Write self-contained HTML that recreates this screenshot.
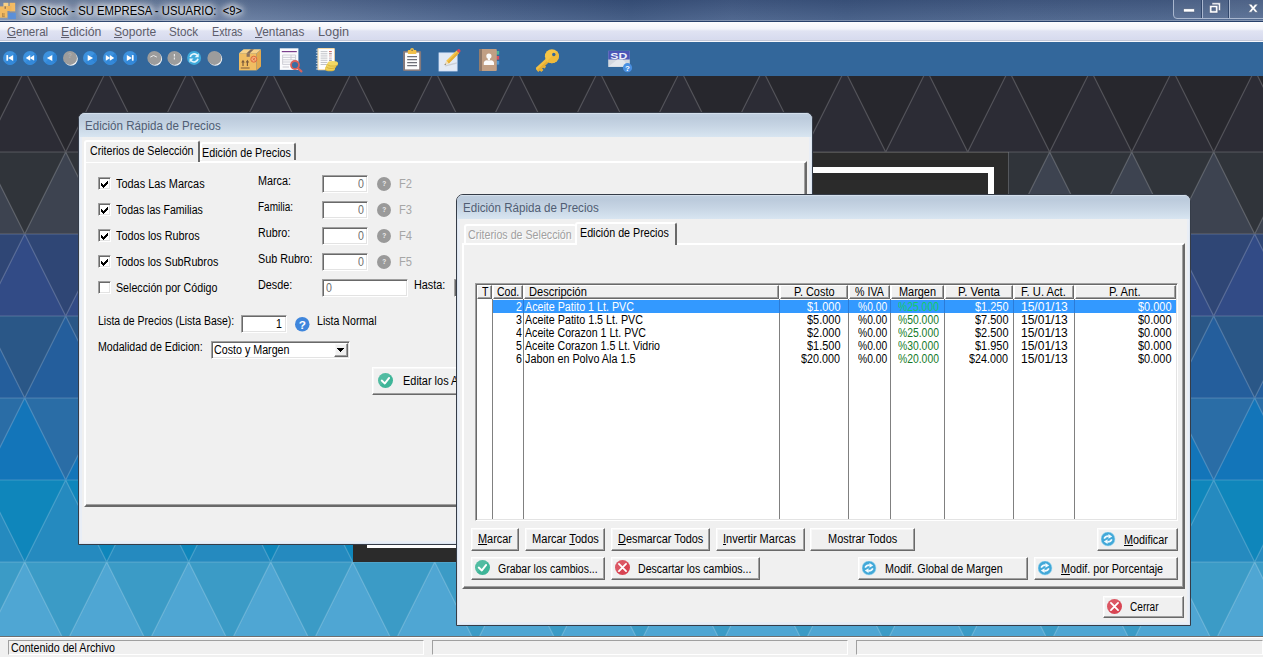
<!DOCTYPE html>
<html lang="es"><head><meta charset="utf-8"><title>SD Stock</title>
<style>
html,body{margin:0;padding:0;}
body{width:1263px;height:657px;overflow:hidden;position:relative;background:#2a2a30;font-family:"Liberation Sans",sans-serif;font-size:11px;}
.bg{position:absolute;left:0;top:0;}
.t{position:absolute;z-index:3;white-space:pre;font-family:"Liberation Sans",sans-serif;font-size:12px;line-height:16px;color:#000;transform-origin:0 0;}
.t u{text-decoration:underline;text-underline-offset:1px;}
.abs{position:absolute;box-sizing:border-box;}
.layer{position:absolute;left:0;top:0;width:1263px;height:657px;}
.glow{text-shadow:0 0 6px #fff,0 0 8px #fff,0 0 10px rgba(255,255,255,.9),0 0 12px rgba(255,255,255,.8);}
#titlebar{left:0;top:0;width:1263px;height:21px;box-shadow:inset 0 -1px 0 rgba(255,255,255,.28);background:linear-gradient(rgba(10,20,50,.16),rgba(255,255,255,.06)),linear-gradient(90deg,#8395b1 0,#6f84a5 12%,#5d749a 24%,#4c658e 36%,#3c5680 50%,#47608a 58%,#405a84 67%,#48618a 80%,#4b648c 100%);}
#menubar{left:0;top:21px;width:1263px;height:21px;background:linear-gradient(#fdfdfe 0,#f3f4fa 7px,#e0e3f2 9px,#d7dbee 17px,#d9dcec 18px,#bfc4d6 18px,#c3c8d9 19px,#f6f7fb 19px,#f6f7fb 20px);border-top:1px solid #27406a;}
#toolbar{left:0;top:42px;width:1263px;height:34px;background:#33679b;}
#status{left:0;top:636px;width:1263px;height:21px;background:#f0f0f0;border-top:1px solid #6f6f6f;box-shadow:inset 0 1px 0 #fff;}
.win{background:#f0f0f0;border:1px solid #353c48;border-radius:7px 7px 0 0;box-shadow:inset 0 0 0 1px #dde6f1,inset 0 0 0 3px #e9eef6;}
.wtitle{left:0;top:0;right:0;height:24px;border-radius:6px 6px 0 0;background:linear-gradient(#dfe8f1 0,#bfcedf 1.5px,#bccbdc 5px,#c8d6e5 14px,#d8e5f1 100%);}
.panel{border:2px solid;border-color:#fff #696969 #696969 #fff;background:#f0f0f0;box-shadow:inset -1px -1px 0 #a0a0a0;}
.tab{border:solid;border-width:2px 2px 0 2px;border-color:#fff #696969 #696969 #fff;background:#f0f0f0;border-radius:3px 3px 0 0;}
.tab.dis{border-right-width:0;}
.tab.sel{z-index:2;}
.sunk{border:1px solid;border-color:#a0a0a0 #fff #fff #a0a0a0;box-shadow:inset 1px 1px 0 #696969,inset -1px -1px 0 #e3e3e3;}
.btn{background:#f0f0f0;border:1px solid;border-color:#fff #696969 #696969 #fff;box-shadow:inset -1px -1px 0 #a0a0a0,inset 1px 1px 0 #f8f8f8;}
.hcell{background:#f0f0f0;border:1px solid;border-color:#fff #696969 #696969 #fff;box-shadow:inset -1px -1px 0 #a0a0a0;}
.sp{position:absolute;top:3px;height:15px;box-sizing:border-box;border:1px solid;border-color:#a0a0a0 #fff #fff #a0a0a0;}
</style></head>
<body>
<svg class="bg" width="1263" height="657" viewBox="0 0 1263 657">
<rect width="1263" height="657" fill="#2a2a30"/>
<rect x="0" y="70" width="1263" height="82" fill="#27272d"/>
<path d="M-57.3 70L-98.3 152L-16.3 152ZM24.7 70L-16.3 152L65.7 152ZM106.7 70L65.7 152L147.7 152ZM188.7 70L147.7 152L229.7 152ZM270.7 70L229.7 152L311.7 152ZM352.7 70L311.7 152L393.7 152ZM434.7 70L393.7 152L475.7 152ZM516.7 70L475.7 152L557.7 152ZM598.7 70L557.7 152L639.7 152ZM680.7 70L639.7 152L721.7 152ZM762.7 70L721.7 152L803.7 152ZM844.7 70L803.7 152L885.7 152ZM926.7 70L885.7 152L967.7 152ZM1008.7 70L967.7 152L1049.7 152ZM1090.7 70L1049.7 152L1131.7 152ZM1172.7 70L1131.7 152L1213.7 152ZM1254.7 70L1213.7 152L1295.7 152Z" fill="#2c2c35"/>
<rect x="0" y="152" width="1263" height="82" fill="#30343a"/>
<path d="M-16.3 152L-57.3 234L24.7 234ZM65.7 152L24.7 234L106.7 234ZM147.7 152L106.7 234L188.7 234ZM229.7 152L188.7 234L270.7 234ZM311.7 152L270.7 234L352.7 234ZM393.7 152L352.7 234L434.7 234ZM475.7 152L434.7 234L516.7 234ZM557.7 152L516.7 234L598.7 234ZM639.7 152L598.7 234L680.7 234ZM721.7 152L680.7 234L762.7 234ZM803.7 152L762.7 234L844.7 234ZM885.7 152L844.7 234L926.7 234ZM967.7 152L926.7 234L1008.7 234ZM1049.7 152L1008.7 234L1090.7 234ZM1131.7 152L1090.7 234L1172.7 234ZM1213.7 152L1172.7 234L1254.7 234ZM1295.7 152L1254.7 234L1336.7 234Z" fill="#3d4350"/>
<rect x="0" y="234" width="1263" height="82" fill="#2f4675"/>
<path d="M-57.3 234L-98.3 316L-16.3 316ZM24.7 234L-16.3 316L65.7 316ZM106.7 234L65.7 316L147.7 316ZM188.7 234L147.7 316L229.7 316ZM270.7 234L229.7 316L311.7 316ZM352.7 234L311.7 316L393.7 316ZM434.7 234L393.7 316L475.7 316ZM516.7 234L475.7 316L557.7 316ZM598.7 234L557.7 316L639.7 316ZM680.7 234L639.7 316L721.7 316ZM762.7 234L721.7 316L803.7 316ZM844.7 234L803.7 316L885.7 316ZM926.7 234L885.7 316L967.7 316ZM1008.7 234L967.7 316L1049.7 316ZM1090.7 234L1049.7 316L1131.7 316ZM1172.7 234L1131.7 316L1213.7 316ZM1254.7 234L1213.7 316L1295.7 316Z" fill="#324b86"/>
<rect x="0" y="316" width="1263" height="82" fill="#2a5787"/>
<path d="M-16.3 316L-57.3 398L24.7 398ZM65.7 316L24.7 398L106.7 398ZM147.7 316L106.7 398L188.7 398ZM229.7 316L188.7 398L270.7 398ZM311.7 316L270.7 398L352.7 398ZM393.7 316L352.7 398L434.7 398ZM475.7 316L434.7 398L516.7 398ZM557.7 316L516.7 398L598.7 398ZM639.7 316L598.7 398L680.7 398ZM721.7 316L680.7 398L762.7 398ZM803.7 316L762.7 398L844.7 398ZM885.7 316L844.7 398L926.7 398ZM967.7 316L926.7 398L1008.7 398ZM1049.7 316L1008.7 398L1090.7 398ZM1131.7 316L1090.7 398L1172.7 398ZM1213.7 316L1172.7 398L1254.7 398ZM1295.7 316L1254.7 398L1336.7 398Z" fill="#245e9c"/>
<rect x="0" y="398" width="1263" height="82" fill="#2a6da6"/>
<path d="M-57.3 398L-98.3 480L-16.3 480ZM24.7 398L-16.3 480L65.7 480ZM106.7 398L65.7 480L147.7 480ZM188.7 398L147.7 480L229.7 480ZM270.7 398L229.7 480L311.7 480ZM352.7 398L311.7 480L393.7 480ZM434.7 398L393.7 480L475.7 480ZM516.7 398L475.7 480L557.7 480ZM598.7 398L557.7 480L639.7 480ZM680.7 398L639.7 480L721.7 480ZM762.7 398L721.7 480L803.7 480ZM844.7 398L803.7 480L885.7 480ZM926.7 398L885.7 480L967.7 480ZM1008.7 398L967.7 480L1049.7 480ZM1090.7 398L1049.7 480L1131.7 480ZM1172.7 398L1131.7 480L1213.7 480ZM1254.7 398L1213.7 480L1295.7 480Z" fill="#1375b9"/>
<rect x="0" y="480" width="1263" height="82" fill="#0f86bb"/>
<path d="M-16.3 480L-57.3 562L24.7 562ZM65.7 480L24.7 562L106.7 562ZM147.7 480L106.7 562L188.7 562ZM229.7 480L188.7 562L270.7 562ZM311.7 480L270.7 562L352.7 562ZM393.7 480L352.7 562L434.7 562ZM475.7 480L434.7 562L516.7 562ZM557.7 480L516.7 562L598.7 562ZM639.7 480L598.7 562L680.7 562ZM721.7 480L680.7 562L762.7 562ZM803.7 480L762.7 562L844.7 562ZM885.7 480L844.7 562L926.7 562ZM967.7 480L926.7 562L1008.7 562ZM1049.7 480L1008.7 562L1090.7 562ZM1131.7 480L1090.7 562L1172.7 562ZM1213.7 480L1172.7 562L1254.7 562ZM1295.7 480L1254.7 562L1336.7 562Z" fill="#258abf"/>
<rect x="0" y="562" width="1263" height="82" fill="#3b9bc6"/>
<path d="M-57.3 562L-98.3 644L-16.3 644ZM24.7 562L-16.3 644L65.7 644ZM106.7 562L65.7 644L147.7 644ZM188.7 562L147.7 644L229.7 644ZM270.7 562L229.7 644L311.7 644ZM352.7 562L311.7 644L393.7 644ZM434.7 562L393.7 644L475.7 644ZM516.7 562L475.7 644L557.7 644ZM598.7 562L557.7 644L639.7 644ZM680.7 562L639.7 644L721.7 644ZM762.7 562L721.7 644L803.7 644ZM844.7 562L803.7 644L885.7 644ZM926.7 562L885.7 644L967.7 644ZM1008.7 562L967.7 644L1049.7 644ZM1090.7 562L1049.7 644L1131.7 644ZM1172.7 562L1131.7 644L1213.7 644ZM1254.7 562L1213.7 644L1295.7 644Z" fill="#4fa6d3"/>
<path d="M0 152H1263M0 234H1263M0 316H1263M0 398H1263M0 480H1263M0 562H1263M0 644H1263M-385.3 70L-98.3 644M-303.3 70L-16.3 644M-221.3 70L65.7 644M-139.3 70L147.7 644M-57.3 70L229.7 644M24.7 70L311.7 644M106.7 70L393.7 644M188.7 70L475.7 644M270.7 70L557.7 644M352.7 70L639.7 644M434.7 70L721.7 644M516.7 70L803.7 644M598.7 70L885.7 644M680.7 70L967.7 644M762.7 70L1049.7 644M844.7 70L1131.7 644M926.7 70L1213.7 644M1008.7 70L1295.7 644M1090.7 70L1377.7 644M1172.7 70L1459.7 644M1254.7 70L1541.7 644M-139.3 70L-426.3 644M-57.3 70L-344.3 644M24.7 70L-262.3 644M106.7 70L-180.3 644M188.7 70L-98.3 644M270.7 70L-16.3 644M352.7 70L65.7 644M434.7 70L147.7 644M516.7 70L229.7 644M598.7 70L311.7 644M680.7 70L393.7 644M762.7 70L475.7 644M844.7 70L557.7 644M926.7 70L639.7 644M1008.7 70L721.7 644M1090.7 70L803.7 644M1172.7 70L885.7 644M1254.7 70L967.7 644M1336.7 70L1049.7 644M1418.7 70L1131.7 644M1500.7 70L1213.7 644" stroke="#ffffff" stroke-opacity="0.2" stroke-width="1.2" fill="none"/>
<rect x="353" y="152" width="655" height="410" fill="#2b2b2b"/>
<path d="M353 152.5H1008.5V562" stroke="#ffffff" stroke-opacity="0.18" fill="none"/>
<rect x="370" y="170" width="621" height="375" fill="none" stroke="#ffffff" stroke-width="6"/>
</svg>
<div id="titlebar" class="abs"></div>
<div id="menubar" class="abs"></div>
<div id="toolbar" class="abs"></div>
<svg class="abs" style="left:0;top:42px" width="1263" height="34" viewBox="0 42 1263 34"><g transform="translate(10 57.9)"><circle r="7" fill="#3d92df"/><path d="M0 0L4.95 -4.95A7 7 0 0 1 4.95 4.95Z" fill="#2c82d4"/><path d="M0 0L4.95 4.95A7 7 0 0 1 -4.95 4.95Z" fill="#3489d9"/><g fill="#fff"><rect x="-3.6" y="-2.8" width="1.7" height="5.6"/><path d="M3.2 -3V3L-1.9 0Z"/></g></g><g transform="translate(30 57.9)"><circle r="7" fill="#3d92df"/><path d="M0 0L4.95 -4.95A7 7 0 0 1 4.95 4.95Z" fill="#2c82d4"/><path d="M0 0L4.95 4.95A7 7 0 0 1 -4.95 4.95Z" fill="#3489d9"/><g fill="#fff"><path d="M0.2 -2.8V2.8L-4.2 0Z"/><path d="M4.2 -2.8V2.8L-0.2 0Z"/></g></g><g transform="translate(50 57.9)"><circle r="7" fill="#3d92df"/><path d="M0 0L4.95 -4.95A7 7 0 0 1 4.95 4.95Z" fill="#2c82d4"/><path d="M0 0L4.95 4.95A7 7 0 0 1 -4.95 4.95Z" fill="#3489d9"/><g fill="#fff"><path d="M2.3 -3V3L-3.1 0Z"/></g></g><g transform="translate(70 57.9)"><circle cx="0.9" cy="0.9" r="6.9" fill="#f4f6f8"/><circle r="7" fill="#9c9c9c"/><text x="0" y="0.5" font-family="Liberation Sans,sans-serif" font-size="7" font-weight="bold" text-anchor="middle" fill="#b2b2b2">?</text></g><g transform="translate(90 57.9)"><circle r="7" fill="#3d92df"/><path d="M0 0L4.95 -4.95A7 7 0 0 1 4.95 4.95Z" fill="#2c82d4"/><path d="M0 0L4.95 4.95A7 7 0 0 1 -4.95 4.95Z" fill="#3489d9"/><g fill="#fff"><path d="M-2.3 -3V3L3.1 0Z"/></g></g><g transform="translate(110 57.9)"><circle r="7" fill="#3d92df"/><path d="M0 0L4.95 -4.95A7 7 0 0 1 4.95 4.95Z" fill="#2c82d4"/><path d="M0 0L4.95 4.95A7 7 0 0 1 -4.95 4.95Z" fill="#3489d9"/><g fill="#fff"><path d="M-0.2 -2.8V2.8L4.2 0Z"/><path d="M-4.2 -2.8V2.8L0.2 0Z"/></g></g><g transform="translate(130 57.9)"><circle r="7" fill="#3d92df"/><path d="M0 0L4.95 -4.95A7 7 0 0 1 4.95 4.95Z" fill="#2c82d4"/><path d="M0 0L4.95 4.95A7 7 0 0 1 -4.95 4.95Z" fill="#3489d9"/><g fill="#fff"><rect x="1.9" y="-2.8" width="1.7" height="5.6"/><path d="M-3.2 -3V3L1.9 0Z"/></g></g><g transform="translate(154.3 57.9)"><circle cx="0.9" cy="0.9" r="6.9" fill="#f4f6f8"/><circle r="7" fill="#9c9c9c"/><path d="M-4 -0.8L-0.8 -2.4L2.6 -0.8" stroke="#e8e8e8" stroke-width="1" fill="none"/></g><g transform="translate(174.4 57.9)"><circle cx="0.9" cy="0.9" r="6.9" fill="#f4f6f8"/><circle r="7" fill="#9c9c9c"/><path d="M0 -4V-1.5M0 -0.3V1.6" stroke="#e8e8e8" stroke-width="1.2" fill="none"/></g><g transform="translate(194.1 57.9)"><circle r="7" fill="#3fabdc"/><path d="M-3.9 -0.9A4 4 0 0 1 3.1 -2.6" fill="none" stroke="#e6f6fd" stroke-width="1.7"/><path d="M4.6 -4.6V-0.6H0.6Z" fill="#e6f6fd"/><path d="M3.9 0.9A4 4 0 0 1 -3.1 2.6" fill="none" stroke="#e6f6fd" stroke-width="1.7"/><path d="M-4.6 4.6V0.6H-0.6Z" fill="#e6f6fd"/></g><g transform="translate(214.4 57.9)"><circle cx="0.9" cy="0.9" r="6.9" fill="#f4f6f8"/><circle r="7" fill="#9c9c9c"/></g><g><path d="M239 53.2L256.6 53.2L256.6 70.4L239 70.4Z" fill="#f0bd62"/><path d="M256.6 53.2L261 49.6V66.4L256.6 70.4Z" fill="#e2a94e"/><path d="M239 53.2L243.6 49.2H261L256.6 53.2Z" fill="#f7d28a"/><path d="M246.6 53.2L250.8 49.2H254L249.8 53.2Z" fill="#7d6a5a"/><rect x="246.6" y="53.2" width="3.2" height="3.6" fill="#8a7260"/><path d="M243 66V61.8M247.4 66V61.8M240.8 68H249.6" stroke="#7a5a3a" stroke-width="1.2" fill="none"/><path d="M241.2 62.6L243 59.8L244.8 62.6ZM245.6 62.6L247.4 59.8L249.2 62.6Z" fill="#7a5a3a"/><circle cx="253.8" cy="59.2" r="3" fill="#f5b07a" stroke="#e06a3c" stroke-width="1"/><path d="M252.6 58L255 60.4M255 58L252.6 60.4" stroke="#e06a3c" stroke-width=".9"/></g><g><rect x="279.8" y="48.3" width="18.6" height="21.6" fill="#fbfbfd"/><rect x="281.8" y="51" width="15" height="1.2" fill="#7a3f8c"/><path d="M282.6 55H295.6V64.4H282.6ZM282.6 57.4H295.6M282.6 59.8H295.6M282.6 62H295.6M291 55V60" stroke="#c9c9d1" stroke-width=".9" fill="none"/><path d="M282.6 67H289" stroke="#c9c9d1" stroke-width="1"/><circle cx="295" cy="65" r="4" fill="#3a6ea3" stroke="#d8615c" stroke-width="1.8"/><path d="M298 68.2L301.4 71.4" stroke="#d8615c" stroke-width="2.2" stroke-linecap="round"/></g><g><rect x="317.4" y="48" width="17.5" height="22.2" rx="1" fill="#f6d9a6"/><rect x="318.6" y="49" width="15.4" height="20.2" fill="#fdfdfd"/><rect x="315.8" y="49.6" width="2.2" height=".9" rx=".45" fill="#c3d0e0"/><rect x="315.8" y="52.3" width="2.2" height=".9" rx=".45" fill="#c3d0e0"/><rect x="315.8" y="55.0" width="2.2" height=".9" rx=".45" fill="#c3d0e0"/><rect x="315.8" y="57.7" width="2.2" height=".9" rx=".45" fill="#c3d0e0"/><rect x="315.8" y="60.4" width="2.2" height=".9" rx=".45" fill="#c3d0e0"/><rect x="315.8" y="63.1" width="2.2" height=".9" rx=".45" fill="#c3d0e0"/><rect x="315.8" y="65.8" width="2.2" height=".9" rx=".45" fill="#c3d0e0"/><rect x="315.8" y="68.5" width="2.2" height=".9" rx=".45" fill="#c3d0e0"/><rect x="320.6" y="51.20" width="6.8" height=".9" fill="#b9bcc2"/><rect x="329" y="51.20" width="2.8" height=".9" fill="#c0504d"/><rect x="320.6" y="53.35" width="6.8" height=".9" fill="#b9bcc2"/><rect x="329" y="53.35" width="2.8" height=".9" fill="#8a6a6a"/><rect x="320.6" y="55.50" width="6.8" height=".9" fill="#b9bcc2"/><rect x="329" y="55.50" width="2.8" height=".9" fill="#d99a96"/><rect x="320.6" y="57.65" width="6.8" height=".9" fill="#b9bcc2"/><rect x="329" y="57.65" width="2.8" height=".9" fill="#b9a9b0"/><rect x="320.6" y="59.80" width="6.8" height=".9" fill="#b9bcc2"/><rect x="329" y="59.80" width="2.8" height=".9" fill="#7a7a95"/><rect x="320.6" y="61.95" width="6.8" height=".9" fill="#b9bcc2"/><rect x="329" y="61.95" width="2.8" height=".9" fill="#b8b8b8"/><rect x="320.6" y="64.10" width="6.8" height=".9" fill="#b9bcc2"/><rect x="329" y="64.10" width="2.8" height=".9" fill="#b8b8b8"/><ellipse cx="330" cy="69" rx="5" ry="2.3" fill="#d9b43c"/><ellipse cx="330" cy="68" rx="5" ry="2.3" fill="#efd25c"/><ellipse cx="331.2" cy="66.6" rx="5" ry="2.3" fill="#d9b43c"/><ellipse cx="331.2" cy="65.6" rx="5" ry="2.3" fill="#efd25c"/><ellipse cx="332.8" cy="64.2" rx="5.2" ry="2.3" fill="#d9b43c"/><ellipse cx="332.8" cy="63.2" rx="5.2" ry="2.3" fill="#f2d864"/></g><g><rect x="403" y="50.9" width="18.1" height="20.1" rx="1.2" fill="#857a7c"/><rect x="405" y="52.6" width="14.2" height="16.8" fill="#fdfdfd"/><rect x="407.8" y="50" width="8.6" height="4" rx=".8" fill="#f2c24a"/><circle cx="412.1" cy="49.8" r="1.9" fill="#f2c24a"/><circle cx="412.1" cy="50.2" r=".8" fill="#7a6a4a"/><path d="M407.2 56.6H417M407.2 59.6H417M407.2 62.6H417M407.2 65.6H417" stroke="#6e7078" stroke-width="1.1"/></g><g><rect x="439" y="52.9" width="18.1" height="18.1" fill="#e3eaf5"/><rect x="439" y="52.9" width="18.1" height="18.1" fill="none" stroke="#cfe0fa" stroke-width=".8"/><path d="M444.5 65.5L456.8 62.2L456.8 63.8L445.5 66.4Z" fill="#c9ced6"/><path d="M446.2 60.8L456.6 50.6L459.2 53L448.8 63.4Z" fill="#f5c64a"/><path d="M447.4 62L457.8 51.8L459.2 53L448.8 63.4Z" fill="#e6ae38"/><path d="M456.6 50.6L458 49.2Q459 48.6 460 49.6Q460.8 50.6 460.4 51.6L459.2 53Z" fill="#e0485a"/><path d="M446.2 60.8L448.8 63.4L444.4 65Z" fill="#f1dcb4"/><path d="M445.2 63.4L446.2 64.4L444.4 65Z" fill="#666"/></g><g><rect x="496" y="51" width="3.2" height="3.6" fill="#4fb29a"/><rect x="496" y="56" width="3.2" height="3.6" fill="#d9525e"/><rect x="496" y="61" width="3.2" height="3.6" fill="#4f97d0"/><rect x="479.2" y="49.1" width="17.6" height="21.9" rx="1" fill="#c19f84"/><rect x="479.2" y="49.1" width="2.8" height="21.9" fill="#8f7868"/><circle cx="488.9" cy="56" r="2.6" fill="#fbfbfb"/><path d="M483.8 65V63Q483.8 60.6 487 60.2L488.9 61L490.8 60.2Q494 60.6 494 63V65Z" fill="#fbfbfb"/><rect x="487.8" y="57.6" width="2.2" height="3" fill="#fbfbfb"/></g><g><g transform="translate(551.9 56.2) rotate(137.5)"><path d="M4 2.3H19.6L20.6 0.8V-2.3H18.4V-4.3H15.6V-2.3H14V-3.8H11.6V-2.3H4Z" fill="#f3bf42"/><path d="M4 -0.2H20.6V-2.3H18.4V-4.3H15.6V-2.3H14V-3.8H11.6V-2.3H4Z" fill="#e6ae34"/></g><circle cx="551.9" cy="56.2" r="7" fill="#f6c546"/><path d="M547 61.1A6.9 6.9 0 0 0 556.8 51.3Z" fill="#efba3a"/><circle cx="553.8" cy="54.5" r="1.7" fill="#33679b"/></g><g><rect x="608.2" y="50.9" width="21.6" height="15.9" fill="#d3d7de"/><rect x="608.2" y="50.9" width="21.6" height="8.6" fill="#4b56b7"/><path d="M608.2 66.8L617.4 59.5H622.6L629.8 66.8Z" fill="#e4e7ec"/><text x="618.8" y="58.6" font-family="Liberation Sans,sans-serif" font-size="9.5" font-weight="bold" text-anchor="middle" fill="#eef0fb" textLength="17" lengthAdjust="spacingAndGlyphs">SD</text><circle cx="627.5" cy="67.7" r="4.6" fill="#4a90e2"/><text x="627.5" y="70.6" font-family="Liberation Sans,sans-serif" font-size="8" font-weight="bold" text-anchor="middle" fill="#fff">?</text></g></svg>
<svg class="abs" style="left:0;top:0" width="1263" height="21" viewBox="0 0 1263 21"><rect x="3.4" y="2.8" width="5" height="5.4" fill="#f6cf86"/><rect x="9.6" y="2.8" width="5.6" height="8.6" fill="#f3bb62"/><rect x="4" y="6" width="7.4" height="5" fill="#f0b55a"/><rect x="0" y="6.4" width="7.4" height="11.3" fill="#f3bb62"/><rect x="8.2" y="13" width="7.8" height="6" fill="#5b8fd8"/><path d="M2.6 13V16M4 13V16M2 16.6H4.8" stroke="#8a6a40" stroke-width=".6"/><rect x="4.6" y="6.4" width="1.2" height="2.4" fill="#7d6a5a"/><path d="M1173.5 0V15Q1173.5 18.5 1177 18.5H1263V0Z" fill="#fff" fill-opacity=".07"/><path d="M1173.5 0V15Q1173.5 18.5 1177 18.5H1263" fill="none" stroke="#a9b7cf" stroke-width="1"/><path d="M1202.5 0V18M1229.5 0V18" stroke="#a9b7cf" stroke-width="1"/><path d="M1201.5 0V18M1228.5 0V18" stroke="#31476c" stroke-width="1"/><rect x="1183.5" y="8.8" width="11" height="3.2" fill="#fff" stroke="#4a5a78" stroke-width=".6"/><path d="M1212 2.8H1220.4V10.6H1218.4V4.8H1212Z" fill="#fff" stroke="#4a5a78" stroke-width=".5"/><path d="M1209.6 5.4H1217.8V13H1209.6ZM1211.8 7.6V10.8H1215.6V7.6Z" fill="#fff" fill-rule="evenodd" stroke="#4a5a78" stroke-width=".5"/><path d="M1248.4 4.2H1251.4L1253.2 6.6L1255 4.2H1258L1254.8 8.2L1258 12.2H1255L1253.2 9.8L1251.4 12.2H1248.4L1251.6 8.2Z" fill="#fff" stroke="#4a5a78" stroke-width=".5"/></svg>
<div id="status" class="abs"><div class="sp" style="left:8px;width:416px"></div><div class="sp" style="left:432px;width:416px"></div><div class="sp" style="left:856px;width:407px"></div></div>
<span id="t0" class="t glow" style="left:21.00px;top:3px;transform:scaleX(0.9423);">SD Stock - SU EMPRESA - USUARIO:  &lt;9&gt;</span>
<span id="t1" class="t" style="left:6.70px;top:24px;transform:scaleX(0.9637);color:#5d5d6b;"><u>G</u>eneral</span>
<span id="t2" class="t" style="left:60.80px;top:24px;transform:scaleX(1.0237);color:#5d5d6b;"><u>E</u>dición</span>
<span id="t3" class="t" style="left:113.50px;top:24px;transform:scaleX(1.0034);color:#5d5d6b;"><u>S</u>oporte</span>
<span id="t4" class="t" style="left:168.60px;top:24px;transform:scaleX(0.9706);color:#5d5d6b;">Stock</span>
<span id="t5" class="t" style="left:211.90px;top:24px;transform:scaleX(0.8969);color:#5d5d6b;">Extras</span>
<span id="t6" class="t" style="left:255.00px;top:24px;transform:scaleX(0.9851);color:#5d5d6b;"><u>V</u>entanas</span>
<span id="t7" class="t" style="left:318.00px;top:24px;transform:scaleX(1.0597);color:#5d5d6b;">Login</span>
<span id="t8" class="t" style="left:11.10px;top:640px;transform:scaleX(0.8902);">Contenido del Archivo</span>
<div class="layer" style="z-index:1">
<div id="win1" class="abs win" style="left:78px;top:112px;width:735px;height:433px;">
<div class="abs wtitle"></div>
</div>
<div class="abs panel" style="left:84px;top:161px;width:723px;height:346px;"></div>
<div class="abs tab" style="left:200px;top:142px;width:96px;height:18px;"></div>
<div class="abs tab sel" style="left:84px;top:140px;width:116px;height:22px;"></div>
<div class="abs sunk" style="left:98px;top:177px;width:13px;height:13px;background:#fff;"></div>
<svg class="abs" style="left:101px;top:181px" width="7" height="7" viewBox="0 0 7 7" shape-rendering="crispEdges"><path d="M0 2h1v1h1v1h1v-1h1v-1h1v-1h1v-1h1v3h-1v1h-1v1h-1v1h-1v1h-1v-1h-1v-1h-1z" fill="#000"/></svg>
<div class="abs sunk" style="left:98px;top:203px;width:13px;height:13px;background:#fff;"></div>
<svg class="abs" style="left:101px;top:207px" width="7" height="7" viewBox="0 0 7 7" shape-rendering="crispEdges"><path d="M0 2h1v1h1v1h1v-1h1v-1h1v-1h1v-1h1v3h-1v1h-1v1h-1v1h-1v1h-1v-1h-1v-1h-1z" fill="#000"/></svg>
<div class="abs sunk" style="left:98px;top:229px;width:13px;height:13px;background:#fff;"></div>
<svg class="abs" style="left:101px;top:233px" width="7" height="7" viewBox="0 0 7 7" shape-rendering="crispEdges"><path d="M0 2h1v1h1v1h1v-1h1v-1h1v-1h1v-1h1v3h-1v1h-1v1h-1v1h-1v1h-1v-1h-1v-1h-1z" fill="#000"/></svg>
<div class="abs sunk" style="left:98px;top:255px;width:13px;height:13px;background:#fff;"></div>
<svg class="abs" style="left:101px;top:259px" width="7" height="7" viewBox="0 0 7 7" shape-rendering="crispEdges"><path d="M0 2h1v1h1v1h1v-1h1v-1h1v-1h1v-1h1v3h-1v1h-1v1h-1v1h-1v1h-1v-1h-1v-1h-1z" fill="#000"/></svg>
<div class="abs sunk" style="left:98px;top:281px;width:13px;height:13px;background:#fff;"></div>
<div class="abs sunk" style="left:322px;top:175px;width:46px;height:18px;background:#fff;"></div>
<svg class="abs" style="left:377.0px;top:177.0px" width="15" height="15" viewBox="0 0 17.14 17.14"><circle cx="8.8" cy="8.8" r="7.2" fill="#fff"/><circle cx="8" cy="8" r="8" fill="#9a9a9a"/><text x="8.2" y="9.8" font-family="Liberation Sans,sans-serif" font-weight="bold" font-size="7.5" text-anchor="middle" fill="#ececec">?</text></svg>
<div class="abs sunk" style="left:322px;top:201px;width:46px;height:18px;background:#fff;"></div>
<svg class="abs" style="left:377.0px;top:203.0px" width="15" height="15" viewBox="0 0 17.14 17.14"><circle cx="8.8" cy="8.8" r="7.2" fill="#fff"/><circle cx="8" cy="8" r="8" fill="#9a9a9a"/><text x="8.2" y="9.8" font-family="Liberation Sans,sans-serif" font-weight="bold" font-size="7.5" text-anchor="middle" fill="#ececec">?</text></svg>
<div class="abs sunk" style="left:322px;top:227px;width:46px;height:18px;background:#fff;"></div>
<svg class="abs" style="left:377.0px;top:229.0px" width="15" height="15" viewBox="0 0 17.14 17.14"><circle cx="8.8" cy="8.8" r="7.2" fill="#fff"/><circle cx="8" cy="8" r="8" fill="#9a9a9a"/><text x="8.2" y="9.8" font-family="Liberation Sans,sans-serif" font-weight="bold" font-size="7.5" text-anchor="middle" fill="#ececec">?</text></svg>
<div class="abs sunk" style="left:322px;top:253px;width:46px;height:18px;background:#fff;"></div>
<svg class="abs" style="left:377.0px;top:255.0px" width="15" height="15" viewBox="0 0 17.14 17.14"><circle cx="8.8" cy="8.8" r="7.2" fill="#fff"/><circle cx="8" cy="8" r="8" fill="#9a9a9a"/><text x="8.2" y="9.8" font-family="Liberation Sans,sans-serif" font-weight="bold" font-size="7.5" text-anchor="middle" fill="#ececec">?</text></svg>
<div class="abs sunk" style="left:322px;top:279px;width:86px;height:18px;background:#fff;"></div>
<div class="abs sunk" style="left:454px;top:279px;width:86px;height:18px;background:#fff;"></div>
<div class="abs sunk" style="left:241px;top:315px;width:46px;height:18px;background:#fff;"></div>
<svg class="abs" style="left:294.8px;top:316.8px" width="15.5" height="15.5" viewBox="0 0 17.10 17.10"><circle cx="8" cy="8" r="8" fill="#3f86dc"/><text x="8.2" y="12.9" font-family="Liberation Sans,sans-serif" font-weight="bold" font-size="13" text-anchor="middle" fill="#fff">?</text></svg>
<div class="abs sunk" style="left:211px;top:341px;width:139px;height:18px;background:#fff;"></div>
<div class="abs btn" style="left:334px;top:343px;width:14px;height:14px;"><svg class="abs" style="left:2px;top:4px" width="7" height="4" viewBox="0 0 7 4" shape-rendering="crispEdges"><path d="M0 0h7v1h-1v1h-1v1h-1v1h-1v-1h-1v-1h-1v-1h-1z" fill="#000"/></svg></div>
<div class="abs btn" style="left:372px;top:367px;width:148px;height:28px;"></div>
<svg class="abs" style="left:377.5px;top:372.5px" width="16" height="16" viewBox="0 0 17.07 17.07"><circle cx="8" cy="8" r="8" fill="#3eb598"/><path d="M2.34 13.66A8 8 0 0 1 13.66 2.34Z" fill="#fff" fill-opacity=".1"/><path d="M4 8.1L7.3 11.1L11.9 5.3" fill="none" stroke="#fff" stroke-width="2.1" stroke-linecap="round" stroke-linejoin="round"/></svg>
<span id="t9" class="t" style="left:84.80px;top:118px;transform:scaleX(0.9641);color:#505d73;">Edición Rápida de Precios</span>
<span id="t10" class="t" style="left:90.20px;top:143px;transform:scaleX(0.8867);">Criterios de Selección</span>
<span id="t11" class="t" style="left:202.00px;top:145px;transform:scaleX(0.8945);">Edición de Precios</span>
<span id="t12" class="t" style="left:116.40px;top:176px;transform:scaleX(0.9099);">Todas Las Marcas</span>
<span id="t13" class="t" style="left:116.40px;top:202px;transform:scaleX(0.8794);">Todas las Familias</span>
<span id="t14" class="t" style="left:116.40px;top:228px;transform:scaleX(0.9017);">Todos los Rubros</span>
<span id="t15" class="t" style="left:116.40px;top:254px;transform:scaleX(0.8969);">Todos los SubRubros</span>
<span id="t16" class="t" style="left:116.40px;top:280px;transform:scaleX(0.8890);">Selección por Código</span>
<span id="t17" class="t" style="left:258.10px;top:173px;transform:scaleX(0.8998);">Marca:</span>
<span id="t18" class="t" style="left:258.10px;top:199px;transform:scaleX(0.8327);">Familia:</span>
<span id="t19" class="t" style="left:258.10px;top:225px;transform:scaleX(0.8940);">Rubro:</span>
<span id="t20" class="t" style="left:258.10px;top:251px;transform:scaleX(0.8995);">Sub Rubro:</span>
<span id="t21" class="t" style="left:258.10px;top:277px;transform:scaleX(0.9022);">Desde:</span>
<span id="t22" class="t" style="left:413.80px;top:277px;transform:scaleX(0.9025);">Hasta:</span>
<span id="t23" class="t" style="left:358.01px;top:176px;transform:scaleX(0.8850);color:#6e6e6e;">0</span>
<span id="t24" class="t" style="left:398.50px;top:176px;transform:scaleX(0.9281);color:#a6a6a6;">F2</span>
<span id="t25" class="t" style="left:358.01px;top:202px;transform:scaleX(0.8850);color:#6e6e6e;">0</span>
<span id="t26" class="t" style="left:398.50px;top:202px;transform:scaleX(0.9281);color:#a6a6a6;">F3</span>
<span id="t27" class="t" style="left:358.01px;top:228px;transform:scaleX(0.8850);color:#6e6e6e;">0</span>
<span id="t28" class="t" style="left:398.50px;top:228px;transform:scaleX(0.9281);color:#a6a6a6;">F4</span>
<span id="t29" class="t" style="left:358.01px;top:254px;transform:scaleX(0.8850);color:#6e6e6e;">0</span>
<span id="t30" class="t" style="left:398.50px;top:254px;transform:scaleX(0.9281);color:#a6a6a6;">F5</span>
<span id="t31" class="t" style="left:326.10px;top:280px;transform:scaleX(0.8850);color:#6e6e6e;">0</span>
<span id="t32" class="t" style="left:98.20px;top:313px;transform:scaleX(0.8726);">Lista de Precios (Lista Base):</span>
<span id="t33" class="t" style="left:276.41px;top:316px;transform:scaleX(0.8850);">1</span>
<span id="t34" class="t" style="left:316.90px;top:313px;transform:scaleX(0.8847);">Lista Normal</span>
<span id="t35" class="t" style="left:98.20px;top:339px;transform:scaleX(0.8867);">Modalidad de Edicion:</span>
<span id="t36" class="t" style="left:213.90px;top:342px;transform:scaleX(0.8914);">Costo y Margen</span>
<span id="t37" class="t" style="left:402.60px;top:373px;transform:scaleX(0.9117);">Editar los Artículos</span>
</div>
<div class="layer" style="z-index:2">
<div id="win2" class="abs win" style="left:456px;top:194px;width:735px;height:432px;">
<div class="abs wtitle"></div>
</div>
<div class="abs panel" style="left:462px;top:243px;width:723px;height:346px;"></div>
<div class="abs tab dis" style="left:464px;top:224px;width:112px;height:19px;"></div>
<div class="abs tab sel" style="left:575px;top:222px;width:102px;height:23px;"></div>
<div class="abs sunk" style="left:475px;top:283px;width:703px;height:238px;background:#fff;"></div>
<div class="abs hcell" style="left:477px;top:285px;width:15px;height:14px;"></div>
<div class="abs hcell" style="left:493px;top:285px;width:30px;height:14px;"></div>
<div class="abs hcell" style="left:524px;top:285px;width:255px;height:14px;"></div>
<div class="abs hcell" style="left:780px;top:285px;width:68px;height:14px;"></div>
<div class="abs hcell" style="left:849px;top:285px;width:41px;height:14px;"></div>
<div class="abs hcell" style="left:891px;top:285px;width:53px;height:14px;"></div>
<div class="abs hcell" style="left:945px;top:285px;width:68px;height:14px;"></div>
<div class="abs hcell" style="left:1014px;top:285px;width:60px;height:14px;"></div>
<div class="abs hcell" style="left:1075px;top:285px;width:101px;height:14px;"></div>
<div class="abs" style="left:492px;top:299px;width:1px;height:220px;background:#808080;"></div>
<div class="abs" style="left:523px;top:299px;width:1px;height:220px;background:#808080;"></div>
<div class="abs" style="left:779px;top:299px;width:1px;height:220px;background:#808080;"></div>
<div class="abs" style="left:848px;top:299px;width:1px;height:220px;background:#808080;"></div>
<div class="abs" style="left:890px;top:299px;width:1px;height:220px;background:#808080;"></div>
<div class="abs" style="left:944px;top:299px;width:1px;height:220px;background:#808080;"></div>
<div class="abs" style="left:1013px;top:299px;width:1px;height:220px;background:#808080;"></div>
<div class="abs" style="left:1074px;top:299px;width:1px;height:220px;background:#808080;"></div>
<div class="abs" style="left:493px;top:300px;width:683px;height:13px;background:#3399ff;"></div>
<div class="abs" style="left:523px;top:300px;width:1px;height:13px;background:#2b7bd8;"></div>
<div class="abs" style="left:779px;top:300px;width:1px;height:13px;background:#2b7bd8;"></div>
<div class="abs" style="left:848px;top:300px;width:1px;height:13px;background:#2b7bd8;"></div>
<div class="abs" style="left:890px;top:300px;width:1px;height:13px;background:#2b7bd8;"></div>
<div class="abs" style="left:944px;top:300px;width:1px;height:13px;background:#2b7bd8;"></div>
<div class="abs" style="left:1013px;top:300px;width:1px;height:13px;background:#2b7bd8;"></div>
<div class="abs" style="left:1074px;top:300px;width:1px;height:13px;background:#2b7bd8;"></div>
<div class="abs btn" style="left:471px;top:528px;width:48px;height:23px;"></div>
<div class="abs btn" style="left:525px;top:528px;width:80px;height:23px;"></div>
<div class="abs btn" style="left:611px;top:528px;width:99px;height:23px;"></div>
<div class="abs btn" style="left:716px;top:528px;width:89px;height:23px;"></div>
<div class="abs btn" style="left:810px;top:528px;width:105px;height:23px;"></div>
<div class="abs btn" style="left:1097px;top:528px;width:81px;height:23px;"></div>
<div class="abs btn" style="left:471px;top:557px;width:134px;height:23px;"></div>
<div class="abs btn" style="left:611px;top:557px;width:149px;height:23px;"></div>
<div class="abs btn" style="left:858px;top:557px;width:170px;height:23px;"></div>
<div class="abs btn" style="left:1034px;top:557px;width:144px;height:23px;"></div>
<div class="abs btn" style="left:1103px;top:596px;width:81px;height:22px;"></div>
<svg class="abs" style="left:1101.0px;top:531.9px" width="15" height="15" viewBox="0 0 17.14 17.14"><circle cx="8" cy="8" r="8" fill="#42a8d8"/><circle cx="8" cy="8" r="8" fill="none" stroke="#9fdcf3" stroke-width=".6"/><g transform="translate(8 8)"><path d="M-4.4 -0.5Q-3 -3.6 0.8 -3.3" fill="none" stroke="#f2fbff" stroke-width="1.9"/><path d="M0.5 -5.6L4.8 -2.9L0.5 -0.4Z" fill="#f2fbff"/><g transform="rotate(180)"><path d="M-4.4 -0.5Q-3 -3.6 0.8 -3.3" fill="none" stroke="#f2fbff" stroke-width="1.9"/><path d="M0.5 -5.6L4.8 -2.9L0.5 -0.4Z" fill="#f2fbff"/></g></g></svg>
<svg class="abs" style="left:474.6px;top:560.3px" width="16" height="16" viewBox="0 0 17.07 17.07"><circle cx="8" cy="8" r="8" fill="#3eb598"/><path d="M2.34 13.66A8 8 0 0 1 13.66 2.34Z" fill="#fff" fill-opacity=".1"/><path d="M4 8.1L7.3 11.1L11.9 5.3" fill="none" stroke="#fff" stroke-width="2.1" stroke-linecap="round" stroke-linejoin="round"/></svg>
<svg class="abs" style="left:614.6px;top:560.3px" width="16" height="16" viewBox="0 0 17.07 17.07"><circle cx="8" cy="8" r="8" fill="#d84553"/><path d="M2.34 13.66A8 8 0 0 1 13.66 2.34Z" fill="#fff" fill-opacity=".1"/><path d="M4.2 4.2L11.8 11.8M11.8 4.2L4.2 11.8" fill="none" stroke="#fff" stroke-width="1.9" stroke-linecap="round"/></svg>
<svg class="abs" style="left:861.9px;top:560.9px" width="15" height="15" viewBox="0 0 17.14 17.14"><circle cx="8" cy="8" r="8" fill="#42a8d8"/><circle cx="8" cy="8" r="8" fill="none" stroke="#9fdcf3" stroke-width=".6"/><g transform="translate(8 8)"><path d="M-4.4 -0.5Q-3 -3.6 0.8 -3.3" fill="none" stroke="#f2fbff" stroke-width="1.9"/><path d="M0.5 -5.6L4.8 -2.9L0.5 -0.4Z" fill="#f2fbff"/><g transform="rotate(180)"><path d="M-4.4 -0.5Q-3 -3.6 0.8 -3.3" fill="none" stroke="#f2fbff" stroke-width="1.9"/><path d="M0.5 -5.6L4.8 -2.9L0.5 -0.4Z" fill="#f2fbff"/></g></g></svg>
<svg class="abs" style="left:1038.0px;top:560.9px" width="15" height="15" viewBox="0 0 17.14 17.14"><circle cx="8" cy="8" r="8" fill="#42a8d8"/><circle cx="8" cy="8" r="8" fill="none" stroke="#9fdcf3" stroke-width=".6"/><g transform="translate(8 8)"><path d="M-4.4 -0.5Q-3 -3.6 0.8 -3.3" fill="none" stroke="#f2fbff" stroke-width="1.9"/><path d="M0.5 -5.6L4.8 -2.9L0.5 -0.4Z" fill="#f2fbff"/><g transform="rotate(180)"><path d="M-4.4 -0.5Q-3 -3.6 0.8 -3.3" fill="none" stroke="#f2fbff" stroke-width="1.9"/><path d="M0.5 -5.6L4.8 -2.9L0.5 -0.4Z" fill="#f2fbff"/></g></g></svg>
<svg class="abs" style="left:1106.5px;top:598.8px" width="16" height="16" viewBox="0 0 17.07 17.07"><circle cx="8" cy="8" r="8" fill="#d84553"/><path d="M2.34 13.66A8 8 0 0 1 13.66 2.34Z" fill="#fff" fill-opacity=".1"/><path d="M4.2 4.2L11.8 11.8M11.8 4.2L4.2 11.8" fill="none" stroke="#fff" stroke-width="1.9" stroke-linecap="round"/></svg>
<span id="t38" class="t" style="left:462.90px;top:200px;transform:scaleX(0.9641);color:#505d73;">Edición Rápida de Precios</span>
<span id="t39" class="t" style="left:467.80px;top:227px;transform:scaleX(0.8884);color:#a0a0a0;text-shadow:1px 1px 0 #fff;">Criterios de Selección</span>
<span id="t40" class="t" style="left:580.10px;top:225px;transform:scaleX(0.8935);">Edición de Precios</span>
<span id="t41" class="t" style="left:482.40px;top:284px;transform:scaleX(0.8850);">T</span>
<span id="t42" class="t" style="left:496.60px;top:284px;transform:scaleX(0.8795);">Cod.</span>
<span id="t43" class="t" style="left:528.80px;top:284px;transform:scaleX(0.9240);">Descripción</span>
<span id="t44" class="t" style="left:793.80px;top:284px;transform:scaleX(0.9107);">P. Costo</span>
<span id="t45" class="t" style="left:854.80px;top:284px;transform:scaleX(0.8875);">% IVA</span>
<span id="t46" class="t" style="left:899.20px;top:284px;transform:scaleX(0.9097);">Margen</span>
<span id="t47" class="t" style="left:957.90px;top:284px;transform:scaleX(0.9581);">P. Venta</span>
<span id="t48" class="t" style="left:1021.00px;top:284px;transform:scaleX(0.9330);">F. U. Act.</span>
<span id="t49" class="t" style="left:1108.80px;top:284px;transform:scaleX(0.9315);">P. Ant.</span>
<span id="t50" class="t" style="left:515.90px;top:299px;transform:scaleX(0.8850);color:#fff;">2</span>
<span id="t51" class="t" style="left:525.30px;top:299px;transform:scaleX(0.8922);color:#fff;">Aceite Patito 1 Lt. PVC</span>
<span id="t52" class="t" style="left:806.80px;top:299px;transform:scaleX(0.9128);color:#fff;">$1.000</span>
<span id="t53" class="t" style="left:858.20px;top:299px;transform:scaleX(0.8559);color:#fff;">%0.00</span>
<span id="t54" class="t" style="left:898.40px;top:299px;transform:scaleX(0.8637);color:#12cc66;">%25.000</span>
<span id="t55" class="t" style="left:974.80px;top:299px;transform:scaleX(0.9128);color:#fff;">$1.250</span>
<span id="t56" class="t" style="left:1021.00px;top:299px;transform:scaleX(1.0013);color:#fff;">15/01/13</span>
<span id="t57" class="t" style="left:1138.20px;top:299px;transform:scaleX(0.9128);color:#fff;">$0.000</span>
<span id="t58" class="t" style="left:515.90px;top:312px;transform:scaleX(0.8850);">3</span>
<span id="t59" class="t" style="left:525.30px;top:312px;transform:scaleX(0.8935);">Aceite Patito 1.5 Lt. PVC</span>
<span id="t60" class="t" style="left:806.80px;top:312px;transform:scaleX(0.9128);">$5.000</span>
<span id="t61" class="t" style="left:858.20px;top:312px;transform:scaleX(0.8559);">%0.00</span>
<span id="t62" class="t" style="left:898.40px;top:312px;transform:scaleX(0.8637);color:#147a28;">%50.000</span>
<span id="t63" class="t" style="left:974.80px;top:312px;transform:scaleX(0.9128);">$7.500</span>
<span id="t64" class="t" style="left:1021.00px;top:312px;transform:scaleX(1.0013);">15/01/13</span>
<span id="t65" class="t" style="left:1138.20px;top:312px;transform:scaleX(0.9128);">$0.000</span>
<span id="t66" class="t" style="left:515.90px;top:325px;transform:scaleX(0.8850);">4</span>
<span id="t67" class="t" style="left:525.30px;top:325px;transform:scaleX(0.8850);">Aceite Corazon 1 Lt. PVC</span>
<span id="t68" class="t" style="left:806.80px;top:325px;transform:scaleX(0.9128);">$2.000</span>
<span id="t69" class="t" style="left:858.20px;top:325px;transform:scaleX(0.8559);">%0.00</span>
<span id="t70" class="t" style="left:898.40px;top:325px;transform:scaleX(0.8637);color:#147a28;">%25.000</span>
<span id="t71" class="t" style="left:974.80px;top:325px;transform:scaleX(0.9128);">$2.500</span>
<span id="t72" class="t" style="left:1021.00px;top:325px;transform:scaleX(1.0013);">15/01/13</span>
<span id="t73" class="t" style="left:1138.20px;top:325px;transform:scaleX(0.9128);">$0.000</span>
<span id="t74" class="t" style="left:515.90px;top:338px;transform:scaleX(0.8850);">5</span>
<span id="t75" class="t" style="left:525.30px;top:338px;transform:scaleX(0.8851);">Aceite Corazon 1.5 Lt. Vidrio</span>
<span id="t76" class="t" style="left:806.80px;top:338px;transform:scaleX(0.9128);">$1.500</span>
<span id="t77" class="t" style="left:858.20px;top:338px;transform:scaleX(0.8559);">%0.00</span>
<span id="t78" class="t" style="left:898.40px;top:338px;transform:scaleX(0.8637);color:#147a28;">%30.000</span>
<span id="t79" class="t" style="left:974.80px;top:338px;transform:scaleX(0.9128);">$1.950</span>
<span id="t80" class="t" style="left:1021.00px;top:338px;transform:scaleX(1.0013);">15/01/13</span>
<span id="t81" class="t" style="left:1138.20px;top:338px;transform:scaleX(0.9128);">$0.000</span>
<span id="t82" class="t" style="left:515.90px;top:351px;transform:scaleX(0.8850);">6</span>
<span id="t83" class="t" style="left:525.30px;top:351px;transform:scaleX(0.8994);">Jabon en Polvo Ala 1.5</span>
<span id="t84" class="t" style="left:801.40px;top:351px;transform:scaleX(0.8970);">$20.000</span>
<span id="t85" class="t" style="left:858.20px;top:351px;transform:scaleX(0.8559);">%0.00</span>
<span id="t86" class="t" style="left:898.40px;top:351px;transform:scaleX(0.8637);color:#147a28;">%20.000</span>
<span id="t87" class="t" style="left:969.40px;top:351px;transform:scaleX(0.8970);">$24.000</span>
<span id="t88" class="t" style="left:1021.00px;top:351px;transform:scaleX(1.0013);">15/01/13</span>
<span id="t89" class="t" style="left:1138.20px;top:351px;transform:scaleX(0.9128);">$0.000</span>
<span id="t90" class="t" style="left:478.30px;top:531px;transform:scaleX(0.9106);"><u>M</u>arcar</span>
<span id="t91" class="t" style="left:531.60px;top:531px;transform:scaleX(0.9231);">Marcar <u>T</u>odos</span>
<span id="t92" class="t" style="left:617.60px;top:531px;transform:scaleX(0.9093);"><u>D</u>esmarcar Todos</span>
<span id="t93" class="t" style="left:723.48px;top:531px;transform:scaleX(0.9152);"><u>I</u>nvertir Marcas</span>
<span id="t94" class="t" style="left:827.70px;top:531px;transform:scaleX(0.9129);">Mostrar Todos</span>
<span id="t95" class="t" style="left:1123.70px;top:532px;transform:scaleX(0.9017);"><u>M</u>odificar</span>
<span id="t96" class="t" style="left:498.20px;top:561px;transform:scaleX(0.8742);">Grabar los cambios...</span>
<span id="t97" class="t" style="left:638.00px;top:561px;transform:scaleX(0.8810);">Descartar los cambios...</span>
<span id="t98" class="t" style="left:884.90px;top:561px;transform:scaleX(0.8965);">Modif. Global de Margen</span>
<span id="t99" class="t" style="left:1060.80px;top:561px;transform:scaleX(0.8943);"><u>M</u>odif. por Porcentaje</span>
<span id="t100" class="t" style="left:1130.00px;top:599px;transform:scaleX(0.8410);">Cerrar</span>
</div>
</body></html>
